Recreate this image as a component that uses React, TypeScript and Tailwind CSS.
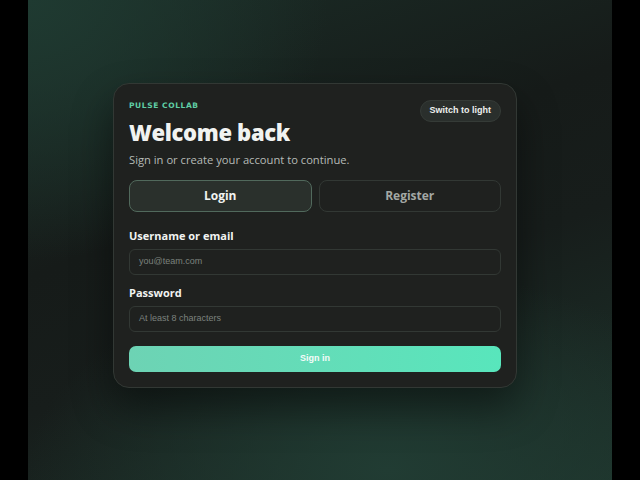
import React from "react";

export default function App() {
  return (
    <div className="w-[640px] h-[480px] bg-black flex justify-center">
      <div
        className="relative w-[584px] h-[480px] overflow-hidden"
        style={{
          background:
            "radial-gradient(ellipse 360px 200px at 360px 470px, #213c33 0%, rgba(33,60,51,0) 100%), radial-gradient(ellipse 300px 260px at 0px 0px, #1f3a31 0%, rgba(31,58,49,0) 100%), linear-gradient(160deg, #1b2d27 0%, #161b19 40%, #171d1b 60%, #1d332b 100%)",
        }}
      >
        <div className="pt-[83px] pl-[85px]">
          <div className="w-[404px] h-[305px] rounded-[16px] border border-[#323834] bg-[#1f211f] px-[15px] pt-[17px] shadow-[0_20px_40px_rgba(0,0,0,0.45)] font-['Open_Sans',sans-serif]">
            <div className="flex justify-between items-start">
              <div>
                <div className="text-[7.5px] leading-[10px] font-bold tracking-[0.6px] text-[#5fcfa6] font-['DejaVu_Sans',sans-serif]">
                  PULSE COLLAB
                </div>
                <div className="mt-[7px] text-[22px] leading-[28px] font-extrabold text-[#f1f3f1] tracking-[-0.015em]">
                  Welcome back
                </div>
              </div>
              <button className="mt-[-1px] h-[22px] px-[9px] rounded-full bg-[#2a2f2c] border border-[#353b37] text-[9px] font-bold text-[#eef0ee] font-['Liberation_Sans',sans-serif]">
                Switch to light
              </button>
            </div>
            <div className="mt-[6px] text-[11.2px] leading-[16px] text-[#b6bbb7]">
              Sign in or create your account to continue.
            </div>
            <div className="mt-[12px] flex gap-[7px]">
              <button className="flex-1 h-[32px] rounded-[8px] border border-[#51695c] bg-[#2a302c] text-[12px] font-bold text-[#f1f3f1]">
                Login
              </button>
              <button className="flex-1 h-[32px] rounded-[8px] border border-[#323834] bg-[#1f211f] text-[12px] font-bold text-[#a3a8a4]">
                Register
              </button>
            </div>
            <div className="mt-[17px] text-[11px] leading-[14px] font-bold text-[#f1f3f1]">
              Username or email
            </div>
            <div className="mt-[6px] h-[26px] rounded-[6px] border border-[#323834] bg-[#1f211f] flex items-center px-[9px] text-[9px] text-[#7c827e] font-['Liberation_Sans',sans-serif]">
              you@team.com
            </div>
            <div className="mt-[11px] text-[11px] leading-[14px] font-bold text-[#f1f3f1]">
              Password
            </div>
            <div className="mt-[6px] h-[26px] rounded-[6px] border border-[#323834] bg-[#1f211f] flex items-center px-[9px] text-[9px] text-[#7c827e] font-['Liberation_Sans',sans-serif]">
              At least 8 characters
            </div>
            <button className="mt-[14px] w-full h-[26px] rounded-[7px] bg-gradient-to-r from-[#6dd3b4] to-[#58e6bc] text-[9px] font-bold text-[#f4fbf8] font-['Liberation_Sans',sans-serif]">
              Sign in
            </button>
          </div>
        </div>
      </div>
    </div>
  );
}
